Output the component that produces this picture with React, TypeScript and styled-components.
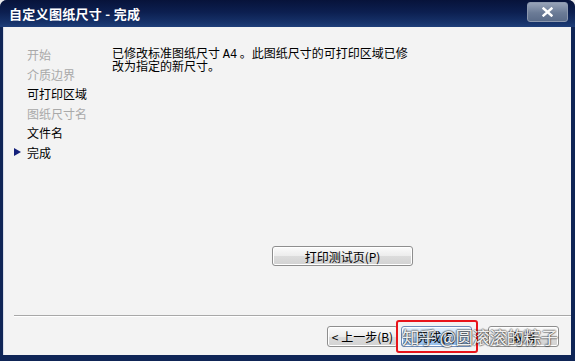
import styled, { createGlobalStyle } from "styled-components";

const steps = [
  { label: "开始", enabled: false },
  { label: "介质边界", enabled: false },
  { label: "可打印区域", enabled: true },
  { label: "图纸尺寸名", enabled: false },
  { label: "文件名", enabled: true },
  { label: "完成", enabled: true, current: true },
];

function App() {
  return (
    <>
      <GlobalStyle />
      <Window>
        <TitleBar>
          <Title>自定义图纸尺寸 - 完成</Title>
          <CloseBtn aria-label="close">
            <svg width="11" height="10" viewBox="0 0 11 10">
              <path d="M1.5 1.5 L9.5 8.5 M9.5 1.5 L1.5 8.5" stroke="#fff" strokeWidth="2.4" strokeLinecap="square" />
            </svg>
          </CloseBtn>
        </TitleBar>

        <Client>
          <Body>
            <Nav>
              {steps.map((s) => (
                <NavItem key={s.label} $enabled={s.enabled}>
                  <Marker>{s.current ? <Arrow /> : null}</Marker>
                  {s.label}
                </NavItem>
              ))}
            </Nav>
            <Content>
              <Message>已修改标准图纸尺寸 <Mono>A4</Mono> 。此图纸尺寸的可打印区域已修</Message>
              <Message>改为指定的新尺寸。</Message>
              <TestBtn>打印测试页(P)</TestBtn>
            </Content>
          </Body>

          <Separator />

          <Footer>
            <Button>&lt; 上一步(B)</Button>
            <Button $primary $highlight>完成(F)</Button>
            <Button $gap>取消</Button>
            <Watermark>知乎 @圆滚滚的粽子</Watermark>
          </Footer>
        </Client>
      </Window>
    </>
  );
}
export default App;

const GlobalStyle = createGlobalStyle`
  html, body {
    margin: 0;
    padding: 0;
    background: #e9e9e9;
  }
  body {
    font-family: "Noto Sans CJK SC", "DejaVu Sans", sans-serif;
    font-size: 12px;
  }
`;

const Window = styled.div`
  width: 575px;
  height: 361px;
  display: flex;
  flex-direction: column;
  border-radius: 7px 7px 0 0;
  overflow: hidden;
  background: #0f2556;
`;

const TitleBar = styled.div`
  height: 27px;
  flex-shrink: 0;
  display: flex;
  align-items: center;
  justify-content: space-between;
  padding: 0 7px 0 9px;
  background: linear-gradient(#07133a 0%, #0c1f50 45%, #17336b 85%, #1f3f7a 100%);
`;

const Title = styled.span`
  color: #fff;
  font-size: 13px;
  font-weight: bold;
  letter-spacing: 0.3px;
`;

const CloseBtn = styled.div`
  width: 39px;
  height: 18px;
  margin-top: -4px;
  display: flex;
  align-items: center;
  justify-content: center;
  border-radius: 3px;
  border: 1px solid #8c98ae;
  background: linear-gradient(#97a3b8, #6b7b96 55%, #5b6c89);
`;

const Client = styled.div`
  flex: 1;
  display: flex;
  flex-direction: column;
  margin: 0 4px 6px 3px;
  background: #f3f3f3;
  box-shadow: inset 1px 0 0 #d6dbe6;
`;

const Body = styled.div`
  flex: 1;
  display: flex;
`;

const Nav = styled.ul`
  width: 109px;
  margin: 0;
  padding: 18px 0 0 11px;
  box-sizing: border-box;
  list-style: none;
`;

const NavItem = styled.li<{ $enabled: boolean }>`
  display: flex;
  align-items: center;
  height: 19.5px;
  color: ${(p) => (p.$enabled ? "#000" : "#a9a9a9")};
`;

const Marker = styled.span`
  width: 13px;
  display: flex;
  align-items: center;
`;

const Arrow = styled.span`
  width: 0;
  height: 0;
  border-top: 4.5px solid transparent;
  border-bottom: 4.5px solid transparent;
  border-left: 7px solid #14207a;
`;

const Content = styled.div`
  flex: 1;
  display: flex;
  flex-direction: column;
  padding-top: 19px;
`;

const Message = styled.p`
  margin: 0;
  height: 13px;
  line-height: 13px;
  color: #000;
  white-space: nowrap;
`;

const Mono = styled.span`
  font-family: "Liberation Mono", "DejaVu Sans Mono", monospace;
  font-size: 12px;
`;

const TestBtn = styled.div`
  width: 141px;
  height: 20px;
  box-sizing: border-box;
  margin: auto 0 49px 160px;
  display: flex;
  align-items: center;
  justify-content: center;
  border: 1px solid #8e8e8e;
  border-radius: 3px;
  background: linear-gradient(#fbfbfb, #ececec 50%, #dcdcdc 51%, #d2d2d2);
  box-shadow: inset 0 0 0 1px #fff;
  color: #000;
`;

const Separator = styled.div`
  height: 1px;
  margin-left: 11px;
  background: #a8a8a8;
  border-bottom: 1px solid #fff;
`;

const Footer = styled.div`
  height: 38px;
  display: flex;
  align-items: center;
  justify-content: flex-end;
  padding: 0 12px 0 0;
  position: relative;
`;

const Button = styled.div<{ $primary?: boolean; $gap?: boolean; $highlight?: boolean }>`
  position: relative;
  width: 71px;
  height: 21px;
  box-sizing: border-box;
  display: flex;
  align-items: center;
  justify-content: center;
  margin-left: ${(p) => (p.$gap ? "16px" : "3px")};
  border: 1px solid ${(p) => (p.$primary ? "#6d8cb8" : "#8e8e8e")};
  border-radius: 3px;
  background: ${(p) =>
    p.$primary
      ? "linear-gradient(#e3f0fc, #c6def7 50%, #a9cbf0 51%, #98c0ec)"
      : "linear-gradient(#fbfbfb, #ececec 50%, #dcdcdc 51%, #d2d2d2)"};
  box-shadow: inset 0 0 0 1px #fff;
  color: #000;

  &::after {
    content: "";
    display: ${(p) => (p.$highlight ? "block" : "none")};
    position: absolute;
    top: -7px;
    bottom: -7px;
    left: -6px;
    right: -7px;
    border: 2.5px solid #e8141b;
    border-radius: 3px;
  }
`;

const Watermark = styled.span`
  position: absolute;
  left: 399px;
  top: 7px;
  font-size: 17.5px;
  letter-spacing: -0.5px;
  color: rgba(255, 255, 255, 0.92);
  text-shadow: 1px 0 1px rgba(0, 0, 0, 0.35), -1px 0 1px rgba(0, 0, 0, 0.35),
    0 1px 1px rgba(0, 0, 0, 0.35), 0 -1px 1px rgba(0, 0, 0, 0.35);
  white-space: nowrap;
  pointer-events: none;
`;
